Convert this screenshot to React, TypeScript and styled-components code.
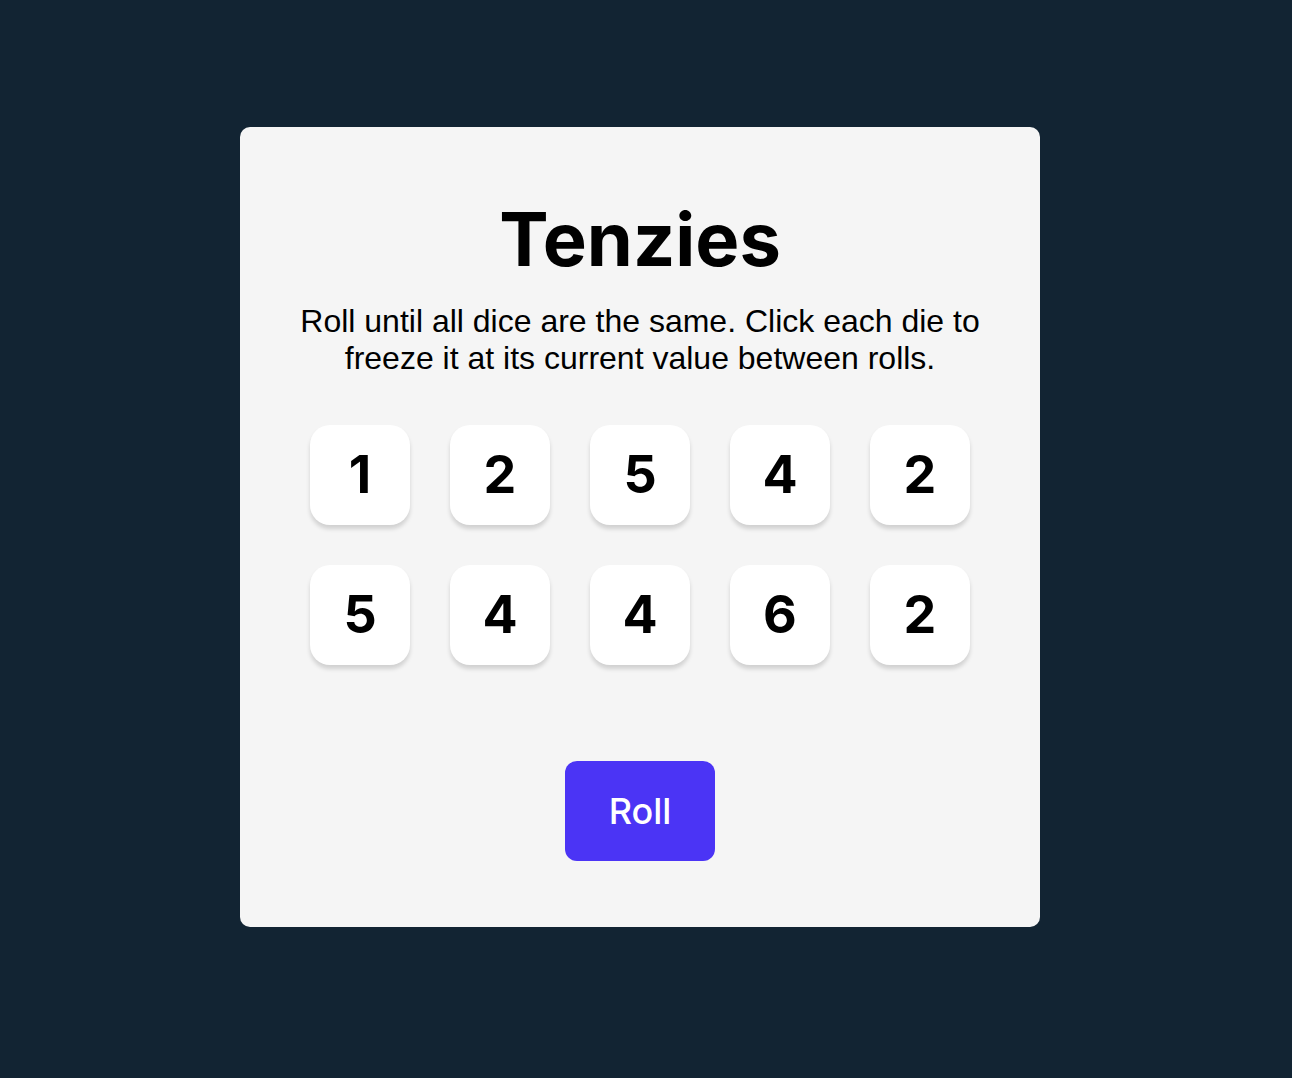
import React, { useState } from "react";
import styled, { createGlobalStyle } from "styled-components";

const GlobalStyle = createGlobalStyle`
  * { box-sizing: border-box; }
  body {
    margin: 0;
    background: #122433;
    color: #000;
    font-family: Inter, "Liberation Sans", sans-serif;
  }
`;

const Page = styled.div`
  min-height: 100vh;
  display: flex;
  align-items: center;
  justify-content: center;
  padding: 24px 36px 48px 24px;
`;

const Board = styled.main`
  width: 100%;
  max-width: 800px;
  display: flex;
  flex-direction: column;
  align-items: center;
  padding: 68px 40px 66px;
  border-radius: 10px;
  background: #f5f5f5;
`;

const Title = styled.h1`
  margin: 0;
  font-size: 74px;
  line-height: 88px;
  font-weight: 700;
`;

const Instructions = styled.p`
  margin: 20px 0 48px;
  max-width: 700px;
  font-family: "Liberation Sans", sans-serif;
  font-size: 32px;
  line-height: 37px;
  text-align: center;
`;

const DiceGrid = styled.div`
  display: grid;
  grid-template-columns: repeat(5, 100px);
  gap: 40px;
`;

const Die = styled.button<{ $held: boolean }>`
  height: 100px;
  padding: 0;
  border: 0;
  border-radius: 20px;
  background: ${({ $held }) => ($held ? "#59e391" : "#fff")};
  box-shadow: 0 4px 4px rgba(0, 0, 0, 0.15);
  color: #000;
  font: 700 52px/100px Inter, sans-serif;
  cursor: pointer;
`;

const RollButton = styled.button`
  width: 150px;
  height: 100px;
  margin-top: 96px;
  padding: 0;
  border: 0;
  border-radius: 12px;
  background: #4b34f5;
  color: #fff;
  font: 500 36px/98px Inter, sans-serif;
  cursor: pointer;
`;

type DieState = { value: number; held: boolean };

const initialDice: DieState[] = [1, 2, 5, 4, 2, 5, 4, 4, 6, 2].map((value) => ({
  value,
  held: false,
}));

export default function App() {
  const [dice, setDice] = useState(initialDice);

  const toggle = (index: number) =>
    setDice((old) => old.map((die, i) => (i === index ? { ...die, held: !die.held } : die)));

  const roll = () =>
    setDice((old) =>
      old.map((die) => (die.held ? die : { ...die, value: Math.ceil(Math.random() * 6) })),
    );

  return (
    <Page>
      <GlobalStyle />
      <Board>
        <Title>Tenzies</Title>
        <Instructions>
          Roll until all dice are the same. Click each die to freeze it at its current value
          between rolls.
        </Instructions>
        <DiceGrid>
          {dice.map((die, index) => (
            <Die
              key={index}
              type="button"
              $held={die.held}
              aria-pressed={die.held}
              onClick={() => toggle(index)}
            >
              {die.value}
            </Die>
          ))}
        </DiceGrid>
        <RollButton type="button" onClick={roll}>Roll</RollButton>
      </Board>
    </Page>
  );
}
